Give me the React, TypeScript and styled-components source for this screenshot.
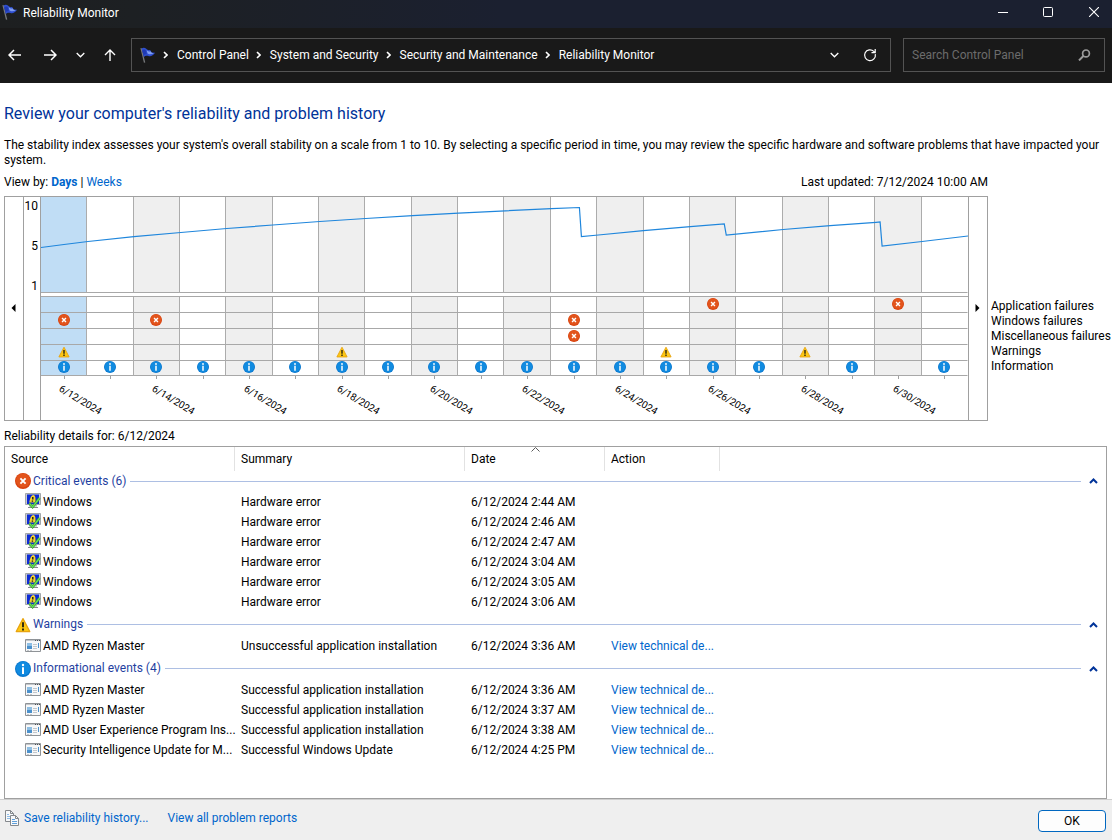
import React from "react";
import styled, { createGlobalStyle, css } from "styled-components";

const GlobalStyle = createGlobalStyle`
  *, *::before, *::after { box-sizing: border-box; }
  body { margin: 0; background: #fff; }
  body, button, input { font-family: Roboto, "Open Sans", sans-serif; font-size: 12px; line-height: 15px; }
  button { padding: 0; border: 0; background: none; color: inherit; }
  svg { display: block; flex: none; }
`;

const Window = styled.div`
  display: flex;
  flex-direction: column;
  min-height: 100vh;
  color: #000;
`;

const TitleBar = styled.header`
  display: flex;
  align-items: center;
  height: 28px;
  padding: 0 0 4px 2px;
  background: linear-gradient(90deg, #1d1f20 0%, #1d2023 12%, #1b2030 45%);
  color: #fff;
`;

const WindowTitle = styled.span`
  flex: 1;
  padding: 2px 0 0 5px;
`;

const CaptionButton = styled.button`
  display: flex;
  align-items: center;
  justify-content: flex-end;
  width: 45px;
  height: 24px;
  color: #fff;
  &:last-child { width: 59px; padding-right: 13px; }
`;

const NavBar = styled.nav`
  display: flex;
  align-items: center;
  height: 55px;
  padding: 0 7px 2px 8px;
  background: #191919;
  color: #fff;
`;

const NavButton = styled.button<{ $gap: number }>`
  display: flex;
  margin-right: ${(p) => p.$gap}px;
  color: #fff;
`;

const fieldBox = css`
  display: flex;
  align-items: center;
  height: 34px;
  border: 1px solid #535353;
`;

const AddressBar = styled.div`
  ${fieldBox}
  flex: 1;
  padding: 0 13px 0 8px;
`;

const Crumbs = styled.ol`
  display: flex;
  align-items: center;
  flex: 1;
  margin: 0;
  padding: 0;
  list-style: none;
`;

const Crumb = styled.li`
  display: flex;
  align-items: center;
  gap: 9px;
  padding-left: 7px;
`;

const CrumbLink = styled.a`
  padding-top: 2px;
  color: #fff;
  text-decoration: none;
  white-space: nowrap;
`;

const BarButton = styled.button`
  display: flex;
  margin-left: 24px;
  color: #fff;
`;

const SearchBox = styled.label`
  ${fieldBox}
  width: 202px;
  margin-left: 12px;
  padding: 0 13px 0 8px;
`;

const SearchInput = styled.input`
  flex: 1;
  min-width: 0;
  padding: 2px 0 0;
  border: 0;
  outline: 0;
  background: none;
  color: #fff;
  &::placeholder { color: #6c6c6c; opacity: 1; }
`;

const Content = styled.main`
  display: flex;
  flex-direction: column;
  flex: 1;
  padding: 20px 5px 0 4px;
`;

const Heading = styled.h1`
  margin: 0;
  color: #003399;
  font-size: 16px;
  font-weight: 400;
  line-height: 22px;
`;

const Intro = styled.p`
  margin: 13px 0 0;
`;

const ChartSection = styled.section`
  display: grid;
  grid-template-columns: 1fr 119px;
  margin-top: 7px;
`;

const ViewRow = styled.div`
  display: flex;
  justify-content: space-between;
  padding-bottom: 6px;
`;

const Link = styled.a<{ $strong?: boolean }>`
  color: #0066cc;
  font-weight: ${(p) => (p.$strong ? 700 : 400)};
  text-decoration: none;
`;

const Chart = styled.div`
  grid-row: 2;
  display: grid;
  grid-template-columns: 19px 16px 1fr 19px;
  height: 225px;
  border: 1px solid #a0a0a0;
`;

const ScrollButton = styled.button<{ $side: "left" | "right" }>`
  display: flex;
  align-items: center;
  justify-content: center;
  padding: 0 2px 2px 0;
  border-${(p) => (p.$side === "left" ? "right" : "left")}: 1px solid #a0a0a0;
`;

const Axis = styled.div`
  display: flex;
  flex-direction: column;
  justify-content: space-between;
  height: 97px;
  padding: 2px 2px 0 0;
  text-align: right;
`;

const Plot = styled.div`
  position: relative;
  display: grid;
  grid-template-columns: repeat(20, minmax(0, 1fr));
  border-left: 1px solid #a0a0a0;
`;

const TrendLine = styled.svg`
  position: absolute;
  top: 0;
  left: 0;
  width: 100%;
  height: 96px;
`;

const Day = styled.div`
  display: flex;
  flex-direction: column;
  --divider: #acacac;
  &:nth-child(20) { --divider: transparent; }
`;

type Tone = "selected" | "shaded" | "plain";
const toneColor = { selected: "#c0ddf5", shaded: "#efefef", plain: "#ffffff" };

const IndexCell = styled.div<{ $tone: Tone }>`
  height: 96px;
  margin-bottom: 3px;
  border-right: 1px solid var(--divider);
  border-bottom: 1px solid #a8a8a8;
  background: ${(p) => toneColor[p.$tone]};
`;

const EventCells = styled.div<{ $tone: Tone }>`
  border-top: 1px solid #a8a8a8;
  background: ${(p) => toneColor[p.$tone]};
`;

const EventCell = styled.div`
  display: flex;
  align-items: center;
  justify-content: center;
  height: 16px;
  padding-bottom: 1px;
  border-right: 1px solid var(--divider);
  border-bottom: 1px solid #a8a8a8;
  &:last-child { height: 15px; padding-bottom: 2px; }
`;

const Tick = styled.span`
  align-self: center;
  width: 1px;
  height: 3px;
  background: #a0a0a0;
`;

const DayLabel = styled.span`
  margin: 1px 0 0 19px;
  font-size: 10px;
  white-space: nowrap;
  transform: rotate(31deg);
  transform-origin: 0 50%;
`;

const Legend = styled.ul`
  grid-row: 2;
  margin: 103px 0 0;
  padding: 0 0 0 3px;
  list-style: none;
  white-space: nowrap;
`;

const DetailsTitle = styled.h2`
  margin: 8px 0 2px;
  font-size: 12px;
  font-weight: 400;
  line-height: 15px;
`;

const DetailsBox = styled.div`
  flex: 1;
  border: 1px solid #a0a0a0;
`;

const Table = styled.table`
  width: 100%;
  border-collapse: separate;
  border-spacing: 0;
  table-layout: fixed;
`;

const Column = styled.col<{ $width?: number }>`
  ${(p) => p.$width && `width: ${p.$width}px;`}
`;

const HeaderCell = styled.th`
  height: 24px;
  padding: 0 6px;
  font-weight: 400;
  text-align: left;
  &:not(:last-child) { border-right: 1px solid #e2e2e2; }
`;

const HeaderInner = styled.span`
  position: relative;
  display: block;
`;

const SortMark = styled.svg`
  position: absolute;
  top: -5px;
  left: 60px;
`;

const GroupCell = styled.th<{ $first: boolean }>`
  height: ${(p) => (p.$first ? 20 : 24)}px;
  padding: ${(p) => (p.$first ? 0 : 3)}px 8px 0 10px;
  font-weight: 400;
`;

const GroupHeader = styled.div`
  display: flex;
  align-items: center;
  gap: 2px;
  color: #1f3f9f;
`;

const GroupLine = styled.span`
  flex: 1;
  height: 1px;
  margin: 0 6px 0 2px;
  background: #adbfe3;
`;

const Collapse = styled.button`
  display: flex;
  padding: 2px 0;
`;

const Cell = styled.td`
  height: 20px;
  padding: 2px 0 0 6px;
  white-space: nowrap;
`;

const SourceCell = styled(Cell)`
  padding: 0 2px 0 20px;
`;

const Source = styled.div`
  display: flex;
  align-items: center;
  gap: 2px;
`;

const SourceName = styled.span`
  padding-top: 2px;
`;

const Footer = styled.footer`
  display: flex;
  align-items: flex-start;
  height: 41px;
  padding: 10px 6px 0 4px;
  border-top: 1px solid #cfcfcf;
  background: #efefef;
`;

const FooterLink = styled(Link)`
  margin-right: 15px;
`;

const FooterLinks = styled.div`
  display: flex;
  align-items: center;
  flex: 1;
  gap: 4px;
`;

const OkButton = styled.button`
  width: 68px;
  height: 22px;
  border: 1px solid #0067c0;
  border-radius: 4px;
  background: #fdfdfd;
`;

const FlagIcon = () => (
  <svg width="16" height="16" viewBox="0 0 16 16">
    <path d="M1 1.2 4.6 15.6" stroke="#77797c" strokeWidth="1.3" fill="none" />
    <path d="M1.6 1.4C3.4.2 5 .6 6.2 1.8 7.2 3 8.4 3.4 10.2 3L11.4 5.6 15 5.8C13.4 8.2 11 9.8 9 9.2 7 8.6 5.4 8.4 3.8 10Z" fill="#2f4fd0" />
    <path d="M6.6 3.2C8 4.4 9.4 4.6 11 4.4L11.6 5.8 13.6 6.2C11.6 7.6 9.6 7.6 7.6 6.4Z" fill="#7f9df0" />
    <path d="M2.4 3.2C4 2.2 5 2.6 6 3.4L6.8 7.2C5.4 7 4.6 7.4 3.4 8Z" fill="#1f3ab4" />
  </svg>
);

const line = { fill: "none", stroke: "currentColor" } as const;

const CrumbChevron = () => (
  <svg width="5" height="8" viewBox="0 0 5 8">
    <path d="M1 1l3 3-3 3" {...line} strokeWidth="1.6" />
  </svg>
);

const DownChevron = () => (
  <svg width="9" height="6" viewBox="0 0 9 6">
    <path d="M.7 1l3.8 3.8L8.3 1" {...line} strokeWidth="1.3" />
  </svg>
);

const ErrorIcon = ({ size = 12 }: { size?: number }) => (
  <svg width={size} height={size} viewBox="0 0 16 16">
    <circle cx="8" cy="8" r="8" fill="#d9430f" />
    <circle cx="8" cy="7.4" r="7" fill="#e2541c" />
    <path d="M5.4 5.4l5.2 5.2M10.6 5.4l-5.2 5.2" stroke="#fff" strokeWidth="1.9" />
  </svg>
);

const InfoIcon = ({ size = 12 }: { size?: number }) => (
  <svg width={size} height={size} viewBox="0 0 16 16">
    <circle cx="8" cy="8" r="8" fill="#0a78cf" />
    <circle cx="8" cy="7.6" r="7" fill="#118be0" />
    <circle cx="8" cy="4" r="1.2" fill="#fff" />
    <path d="M8 6.3V13" stroke="#fff" strokeWidth="2" />
  </svg>
);

const WarningIcon = ({ size = 12 }: { size?: number }) => (
  <svg width={size} height={size} viewBox="0 0 16 16">
    <path d="M8 1.6 14.8 14.6H1.2Z" fill="#fcc713" stroke="#e8a410" strokeWidth="1.2" strokeLinejoin="round" />
    <path d="M8 5.2V10.2M8 11.4v2" stroke="#2a2410" strokeWidth="1.9" />
  </svg>
);

const MonitorIcon = () => (
  <svg width="16" height="16" viewBox="0 0 16 16">
    <path d="M.5.5h15v11H.5z" fill="#c9ccd0" stroke="#a2a6aa" />
    <path d="M2 1.5h12v9.5H2z" fill="#0b2bd6" />
    <path d="M4 12h8v1.6H4z" fill="#b6b9bd" />
    <path d="M3 14h10v1H3z" fill="#85888c" />
    <path d="M4.2 9.6C5 5 6.4 2 8.4 2S10.6 5 10.4 9.6Z" fill="#f3d22c" />
    <path d="M7.8 4v2.4M7.4 7.4v1.4" stroke="#1c1c1c" strokeWidth="1.4" />
    <path d="M4.4 10.4l3.2 3.6L14.6 5" fill="none" stroke="#2f9a2c" strokeWidth="2.4" />
    <path d="M4.4 10.4l3.2 3.6L14.6 5" fill="none" stroke="#66dc55" strokeWidth="1.4" />
  </svg>
);

const AppIcon = () => (
  <svg width="16" height="13" viewBox="0 0 16 13">
    <path d="M.5.5h15v12H.5z" fill="#f7f8f9" stroke="#8f9397" />
    <path d="M1 1h14v1H1z" fill="#c3c7cb" />
    <path d="M10 1.5h1M12 1.5h1M14 1.5h1" stroke="#4c5054" />
    <path d="M2 4h5v6H2z" fill="#4a90cc" />
    <path d="M2 4h5v3H2z" fill="#8fbfe4" />
    <path d="M8 5.5h4M8 7.5h4M8 9.5h4M2 11.5h2M5 11.5h2" stroke="#c3c7cb" />
    <path d="M13.5 4v5" stroke="#4a90cc" />
  </svg>
);

const CopyIcon = () => (
  <svg width="16" height="16" viewBox="0 0 16 16">
    <path d="M1.5.5h5l3 3v8h-8z" fill="#f8f9fa" stroke="#85898d" />
    <path d="M6.5.5v3h3" fill="none" stroke="#85898d" />
    <path d="M3 4.5h2M3 6.5h3M3 8.5h3" stroke="#8fbce6" />
    <path d="M6.5 5.5h5l3 3v7h-8z" fill="#f8f9fa" stroke="#85898d" />
    <path d="M11.5 5.5v3h3" fill="none" stroke="#85898d" />
    <path d="M8 9.5h3M8 11.5h5M8 13.5h5" stroke="#5f9fda" />
  </svg>
);

type Kind = "error" | "warning" | "info";
const icons: Record<Kind, React.FC<{ size?: number }>> = {
  error: ErrorIcon,
  warning: WarningIcon,
  info: InfoIcon,
};

const rowKinds: Kind[] = ["error", "error", "error", "warning", "info"];
const rowDays = [
  [14, 18],
  [0, 2, 11],
  [11],
  [0, 6, 13, 16],
  [0, 1, 2, 3, 4, 5, 6, 7, 8, 9, 10, 11, 12, 13, 14, 15, 17, 19],
];
const legend = ["Application failures", "Windows failures", "Miscellaneous failures", "Warnings", "Information"];

const trend =
  "0,50.5 23,47.5 47,44.5 93,39.7 140,35.5 186,31.5 232,28 279,24.5 325,21.5 372,18.7 418,16.2 465,13.8 511,11.7 539,10.5 541,39.5 558,38 603,33.7 650,29.7 684,27 686,38 743,32.5 790,28.6 836,25.3 840,25 842,49 882,44.5 928,39";

interface EventRow {
  source: string;
  summary: string;
  date: string;
  action?: string;
}
const hardware = (time: string): EventRow => ({
  source: "Windows",
  summary: "Hardware error",
  date: `6/12/2024 ${time} AM`,
});
const details = "View technical de...";
const groups: { title: string; kind: Kind; rows: EventRow[] }[] = [
  {
    title: "Critical events (6)",
    kind: "error",
    rows: ["2:44", "2:46", "2:47", "3:04", "3:05", "3:06"].map(hardware),
  },
  {
    title: "Warnings",
    kind: "warning",
    rows: [
      { source: "AMD Ryzen Master", summary: "Unsuccessful application installation", date: "6/12/2024 3:36 AM", action: details },
    ],
  },
  {
    title: "Informational events (4)",
    kind: "info",
    rows: [
      { source: "AMD Ryzen Master", summary: "Successful application installation", date: "6/12/2024 3:36 AM", action: details },
      { source: "AMD Ryzen Master", summary: "Successful application installation", date: "6/12/2024 3:37 AM", action: details },
      { source: "AMD User Experience Program Ins...", summary: "Successful application installation", date: "6/12/2024 3:38 AM", action: details },
      { source: "Security Intelligence Update for M...", summary: "Successful Windows Update", date: "6/12/2024 4:25 PM", action: details },
    ],
  },
];

const crumbs = ["Control Panel", "System and Security", "Security and Maintenance", "Reliability Monitor"];

const StabilityChart = () => (
  <Chart>
    <ScrollButton $side="left" aria-label="Earlier">
      <svg width="5" height="8" viewBox="0 0 5 8"><path d="M4.5 0v8L.5 4z" /></svg>
    </ScrollButton>
    <Axis>
      <span>10</span>
      <span>5</span>
      <span>1</span>
    </Axis>
    <Plot>
      {Array.from({ length: 20 }, (_, day) => {
        const tone: Tone = day === 0 ? "selected" : day % 2 ? "plain" : "shaded";
        return (
          <Day key={day}>
            <IndexCell $tone={tone} />
            <EventCells $tone={tone}>
              {rowKinds.map((kind, row) => {
                const Icon = icons[kind];
                return <EventCell key={row}>{rowDays[row].includes(day) && <Icon />}</EventCell>;
              })}
            </EventCells>
            <Tick />
            {day % 2 === 0 && <DayLabel>{`6/${day + 12}/2024`}</DayLabel>}
          </Day>
        );
      })}
      <TrendLine viewBox="0 0 928 96" preserveAspectRatio="none">
        <polyline points={trend} fill="none" stroke="#1f86dc" strokeWidth="1.2" vectorEffect="non-scaling-stroke" />
      </TrendLine>
    </Plot>
    <ScrollButton $side="right" aria-label="Later">
      <svg width="5" height="8" viewBox="0 0 5 8"><path d="M.5 0v8l4-4z" /></svg>
    </ScrollButton>
  </Chart>
);

const DetailsTable = () => (
  <Table>
    <colgroup>
      <Column $width={230} />
      <Column $width={230} />
      <Column $width={140} />
      <Column $width={115} />
      <Column />
    </colgroup>
    <thead>
      <tr>
        <HeaderCell>Source</HeaderCell>
        <HeaderCell>Summary</HeaderCell>
        <HeaderCell>
          <HeaderInner>
            Date
            <SortMark width="9" height="5" viewBox="0 0 9 5"><path d="M.5 4.5l4-4 4 4" fill="none" stroke="#5a5a5a" /></SortMark>
          </HeaderInner>
        </HeaderCell>
        <HeaderCell>Action</HeaderCell>
        <HeaderCell />
      </tr>
    </thead>
    {groups.map((group, index) => {
      const Icon = icons[group.kind];
      return (
        <tbody key={group.title}>
          <tr>
            <GroupCell colSpan={5} $first={index === 0}>
              <GroupHeader>
                <Icon size={16} />
                {group.title}
                <GroupLine />
                <Collapse aria-label={`Collapse ${group.title}`}>
                  <svg width="9" height="6" viewBox="0 0 9 6"><path d="M1 5l3.5-3.5L8 5" fill="none" stroke="#003399" strokeWidth="2" /></svg>
                </Collapse>
              </GroupHeader>
            </GroupCell>
          </tr>
          {group.rows.map((row, i) => (
            <tr key={i}>
              <SourceCell>
                <Source>
                  {group.kind === "error" ? <MonitorIcon /> : <AppIcon />}
                  <SourceName>{row.source}</SourceName>
                </Source>
              </SourceCell>
              <Cell>{row.summary}</Cell>
              <Cell>{row.date}</Cell>
              <Cell>{row.action && <Link href="#details">{row.action}</Link>}</Cell>
              <Cell />
            </tr>
          ))}
        </tbody>
      );
    })}
  </Table>
);

export default function App() {
  return (
    <Window>
      <GlobalStyle />
      <TitleBar>
        <FlagIcon />
        <WindowTitle>Reliability Monitor</WindowTitle>
        <CaptionButton aria-label="Minimize">
          <svg width="10" height="10" viewBox="0 0 10 10"><path d="M0 5.5h10" {...line} /></svg>
        </CaptionButton>
        <CaptionButton aria-label="Maximize">
          <svg width="10" height="10" viewBox="0 0 10 10"><rect x=".5" y=".5" width="9" height="9" rx="1" {...line} /></svg>
        </CaptionButton>
        <CaptionButton aria-label="Close">
          <svg width="10" height="10" viewBox="0 0 10 10"><path d="M0 0l10 10M10 0L0 10" {...line} strokeWidth="1.1" /></svg>
        </CaptionButton>
      </TitleBar>
      <NavBar>
        <NavButton $gap={23} aria-label="Back">
          <svg width="13" height="12" viewBox="0 0 13 12"><path d="M13 6H1.2M6 1L1 6l5 5" {...line} strokeWidth="1.5" /></svg>
        </NavButton>
        <NavButton $gap={19} aria-label="Forward">
          <svg width="13" height="12" viewBox="0 0 13 12"><path d="M0 6h11.8M7 1l5 5-5 5" {...line} strokeWidth="1.5" /></svg>
        </NavButton>
        <NavButton $gap={19} aria-label="Recent locations"><DownChevron /></NavButton>
        <NavButton $gap={15} aria-label="Up">
          <svg width="12" height="12" viewBox="0 0 12 12"><path d="M6 12V1.2M1 6l5-5 5 5" {...line} strokeWidth="1.4" /></svg>
        </NavButton>
        <AddressBar>
          <FlagIcon />
          <Crumbs>
            {crumbs.map((name) => (
              <Crumb key={name}>
                <CrumbChevron />
                <CrumbLink href="#location">{name}</CrumbLink>
              </Crumb>
            ))}
          </Crumbs>
          <BarButton aria-label="Previous locations"><DownChevron /></BarButton>
          <BarButton aria-label="Refresh">
            <svg width="14" height="14" viewBox="0 0 14 14">
              <path d="M12.3 6.2A5.4 5.4 0 1 1 10.8 3.4L12 4.5M12.2 1v3.7H8.5" {...line} strokeWidth="1.2" />
            </svg>
          </BarButton>
        </AddressBar>
        <SearchBox>
          <SearchInput type="search" placeholder="Search Control Panel" aria-label="Search Control Panel" />
          <svg width="13" height="12" viewBox="0 0 13 12">
            <circle cx="8" cy="4.4" r="3.4" fill="none" stroke="#9b9b9b" strokeWidth="1.7" />
            <path d="M5.6 6.8L1 11.4" fill="none" stroke="#9b9b9b" strokeWidth="2" />
          </svg>
        </SearchBox>
      </NavBar>
      <Content>
        <Heading>Review your computer's reliability and problem history</Heading>
        <Intro>
          The stability index assesses your system's overall stability on a scale from 1 to 10. By selecting a specific period in time, you may review the specific hardware and software problems that have impacted your system.
        </Intro>
        <ChartSection>
          <ViewRow>
            <span>
              View by: <Link $strong href="#days">Days</Link> | <Link href="#weeks">Weeks</Link>
            </span>
            <span>Last updated: 7/12/2024 10:00 AM</span>
          </ViewRow>
          <StabilityChart />
          <Legend>
            {legend.map((name) => (
              <li key={name}>{name}</li>
            ))}
          </Legend>
        </ChartSection>
        <DetailsTitle>Reliability details for: 6/12/2024</DetailsTitle>
        <DetailsBox>
          <DetailsTable />
        </DetailsBox>
      </Content>
      <Footer>
        <FooterLinks>
          <CopyIcon />
          <FooterLink href="#save">Save reliability history...</FooterLink>
          <Link href="#reports">View all problem reports</Link>
        </FooterLinks>
        <OkButton>OK</OkButton>
      </Footer>
    </Window>
  );
}
